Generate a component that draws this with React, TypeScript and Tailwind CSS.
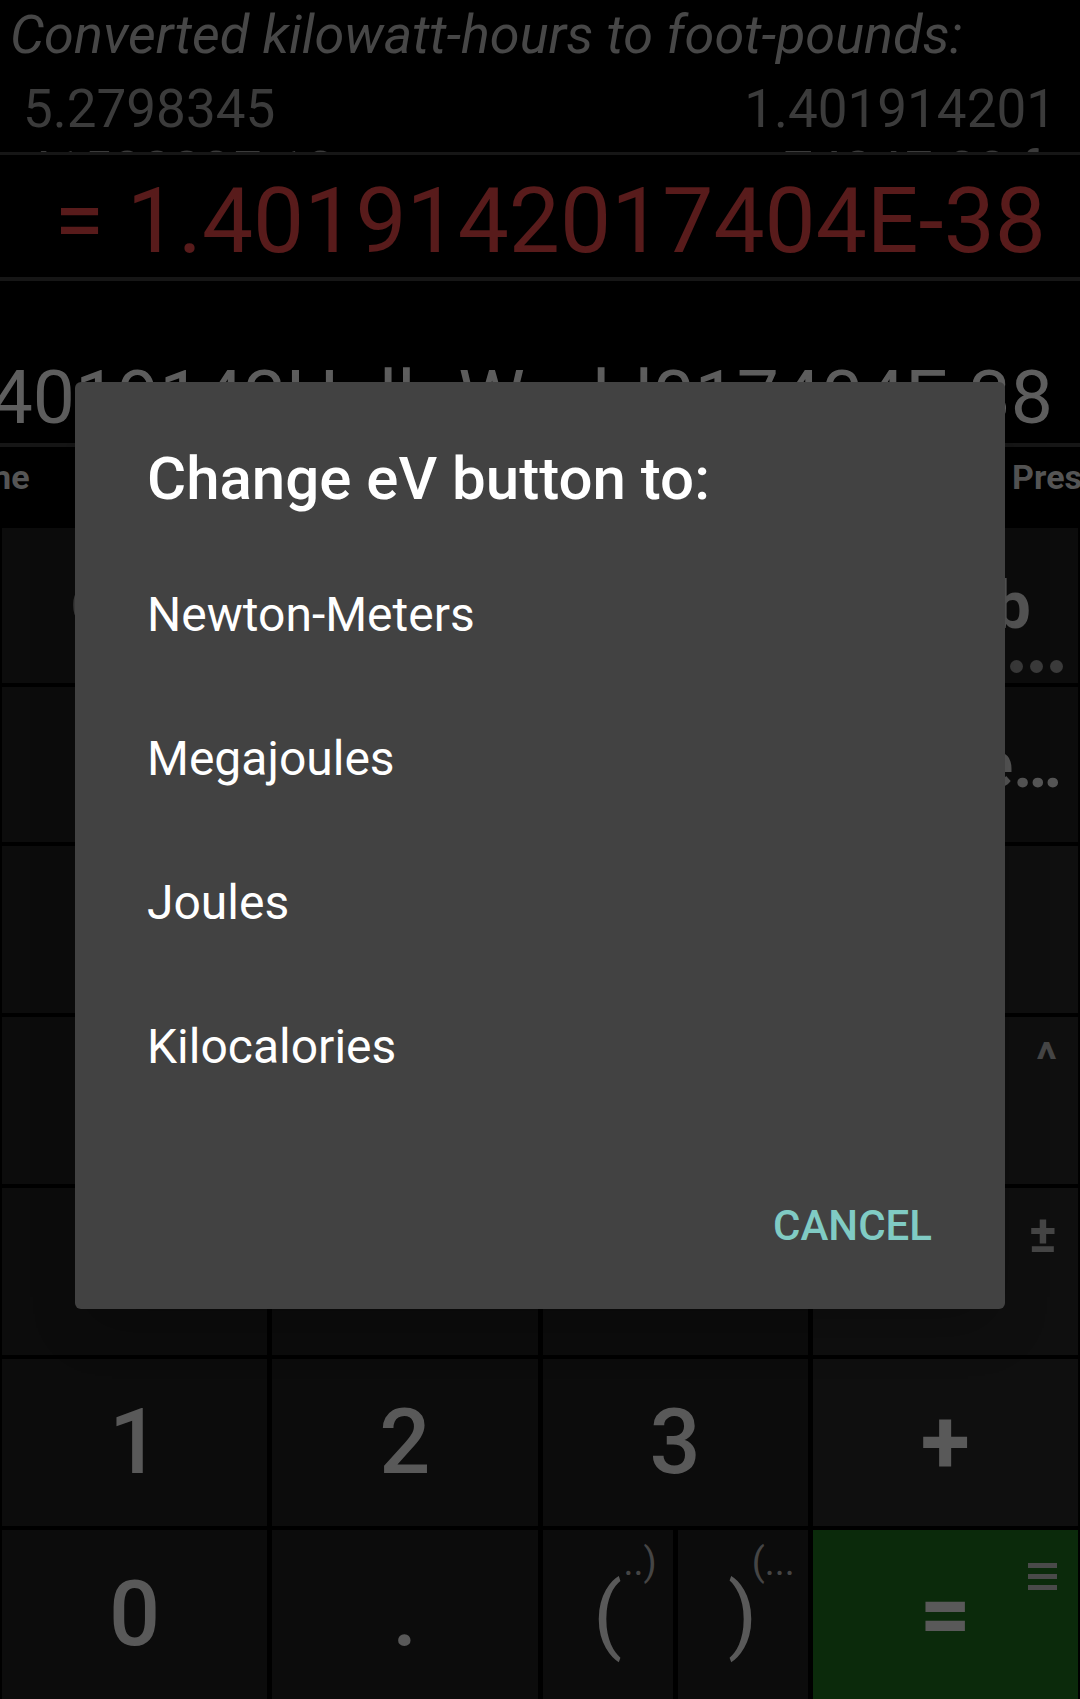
import type { ReactNode } from 'react'

type KeyProps = {
  children?: ReactNode
  className?: string
  bg?: string
  color?: string
}

function Key({ children, className = '', bg = 'bg-[#0c0c0c]', color = 'text-[#595959]' }: KeyProps) {
  return (
    <div className={`relative flex items-center justify-center overflow-hidden ${bg} ${color} ${className}`}>
      {children}
    </div>
  )
}

function Corner({ children, className = '' }: KeyProps) {
  return <span className={`absolute font-bold leading-none text-[#454545] ${className}`}>{children}</span>
}

const OPTIONS = ['Newton-Meters', 'Megajoules', 'Joules', 'Kilocalories']

export default function App() {
  return (
    <div className="relative h-[1699px] w-[1080px] overflow-hidden bg-black [font-family:Roboto,'Noto_Sans',sans-serif]">
      {/* conversion header */}
      <div className="h-[152px] overflow-hidden">
        <div className="whitespace-nowrap pl-[10px] pt-[4px] text-[54px] italic leading-[62px] text-[#474747]">
          Converted kilowatt-hours to foot-pounds:
        </div>
        <div className="mt-[12px] flex justify-between pl-[23px] pr-[24px] text-[53px] leading-[62px] text-[#3b3b3b]">
          <div>
            <div>5.2798345</div>
            <div>4158003E-13</div>
          </div>
          <div className="text-right">
            <div>1.401914201</div>
            <div>7404E-38 ft</div>
          </div>
        </div>
      </div>
      <div className="h-[3px] bg-[#161616]" />

      {/* result */}
      <div className="flex h-[122px] justify-end overflow-hidden pr-[34px] pt-[16px] text-[91px] leading-[100px] text-[#581b1b]">
        <span className="shrink-0 whitespace-nowrap">= 1.4019142017404E-38</span>
      </div>
      <div className="h-[4px] bg-[#161616]" />

      {/* input */}
      <div className="flex h-[162px] justify-end overflow-hidden pr-[27px] pt-[71px] text-[75px] leading-[90px] text-[#5e5e5e]">
        <span className="shrink-0 whitespace-nowrap">1.4019142HelloWorld017404E-38</span>
      </div>
      <div className="h-[4px] bg-[#161616]" />

      {/* category tabs */}
      <div className="flex h-[81px] justify-between overflow-hidden pt-[10px] text-[34px] font-bold leading-[40px] text-[#555555]">
        <span className="-ml-[87px] shrink-0">Volume</span>
        <span className="shrink-0">Energy</span>
        <span className="shrink-0">Power</span>
        <span className="-mr-[69px] shrink-0">Pressure</span>
      </div>

      {/* keypad */}
      <div className="flex flex-col gap-[4px] px-[2px]">
        <div className="grid h-[155px] grid-cols-4 gap-[5px]">
          <Key color="text-[#3c3c3c]" className="text-[54px] font-bold">Clear</Key>
          <Key className="text-[54px] font-bold">kWh</Key>
          <Key className="text-[54px] font-bold">eV</Key>
          <Key color="text-[#555555]" className="justify-end pr-[47px] text-[66px] font-bold leading-[70px]">
            ft-lb
            <div className="absolute bottom-[10px] right-[15px] flex gap-[7px]">
              <span className="h-[13px] w-[13px] rounded-full bg-[#3a3a3a]" />
              <span className="h-[13px] w-[13px] rounded-full bg-[#3a3a3a]" />
              <span className="h-[13px] w-[13px] rounded-full bg-[#3a3a3a]" />
            </div>
          </Key>
        </div>
        <div className="grid h-[155px] grid-cols-4 gap-[5px]">
          <Key />
          <Key />
          <Key />
          <Key color="text-[#555555]" className="justify-end pr-[16px] text-[66px] font-bold leading-[70px]">
            More…
          </Key>
        </div>
        <div className="grid h-[167px] grid-cols-4 gap-[5px] text-[90px] font-medium">
          <Key>7</Key>
          <Key>8</Key>
          <Key>9</Key>
          <Key bg="bg-[#0f0f0f]" className="font-bold">÷</Key>
        </div>
        <div className="grid h-[167px] grid-cols-4 gap-[5px] text-[90px] font-medium">
          <Key>4</Key>
          <Key>5</Key>
          <Key>6</Key>
          <Key bg="bg-[#0f0f0f]" className="font-bold">
            ×<Corner className="right-[21px] top-[19px] text-[48px]">^</Corner>
          </Key>
        </div>
        <div className="grid h-[167px] grid-cols-4 gap-[5px] text-[90px] font-medium">
          <Key>√</Key>
          <Key>%</Key>
          <Key>E</Key>
          <Key bg="bg-[#0f0f0f]" className="font-bold">
            −<Corner className="right-[21px] top-[21px] text-[52px]">±</Corner>
          </Key>
        </div>
        <div className="grid h-[167px] grid-cols-4 gap-[5px] text-[90px] font-medium">
          <Key>1</Key>
          <Key>2</Key>
          <Key>3</Key>
          <Key bg="bg-[#0f0f0f]" className="font-bold">+</Key>
        </div>
        <div className="grid h-[169px] grid-cols-4 gap-[5px] text-[90px] font-medium">
          <Key>0</Key>
          <Key>.</Key>
          <div className="grid grid-cols-2 gap-[5px]">
            <Key className="text-[84px] font-normal">
              (
              <span className="absolute left-[81px] top-[13px] text-[38px] leading-none text-[#454545]">..)</span>
            </Key>
            <Key className="text-[84px] font-normal">
              )
              <span className="absolute left-[74px] top-[13px] text-[38px] leading-none text-[#454545]">(...</span>
            </Key>
          </div>
          <Key bg="bg-[#0b2a0b]" className="font-bold">
            =
            <div className="absolute right-[21px] top-[33px] flex flex-col gap-[6px]">
              <span className="h-[5px] w-[29px] bg-[#4a4a4a]" />
              <span className="h-[5px] w-[29px] bg-[#4a4a4a]" />
              <span className="h-[5px] w-[29px] bg-[#4a4a4a]" />
            </div>
          </Key>
        </div>
      </div>

      {/* dialog */}
      <div className="absolute left-[75px] top-[382px] flex h-[927px] w-[930px] flex-col rounded-[6px] bg-[#424242] pt-[62px] shadow-2xl">
        <div className="px-[72px] text-[60px] font-medium leading-[70px] text-white">Change eV button to:</div>
        <div className="mt-[29px] flex flex-col">
          {OPTIONS.map((opt) => (
            <div key={opt} className="h-[144px] px-[72px] text-[48px] leading-[144px] text-white">
              {opt}
            </div>
          ))}
        </div>
        <div className="mt-[83px] flex justify-end pr-[73px]">
          <span className="text-[42px] font-medium leading-[48px] text-[#80cbc4]">CANCEL</span>
        </div>
      </div>
    </div>
  )
}
